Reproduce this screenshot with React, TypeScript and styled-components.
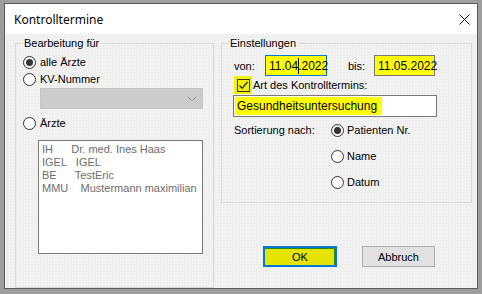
import React from "react"
import styled, { createGlobalStyle } from "styled-components"

const GlobalStyle = createGlobalStyle`
  html, body {
    margin: 0;
    padding: 0;
    background: #9d9d9d;
  }
  body {
    font-family: "Liberation Sans", Arial, sans-serif;
    font-size: 11px;
    color: #000;
  }
`

const Window = styled.div`
  margin: 3px 0 0 4px;
  width: 472px;
  height: 284px;
  border: 1px solid #5a5a5a;
  display: flex;
  flex-direction: column;
  background: #f0f0f0;
`

const TitleBar = styled.div`
  height: 30px;
  background: #fff;
  display: flex;
  align-items: center;
  justify-content: space-between;
  padding-left: 9px;
`

const Title = styled.div`
  font-family: "Noto Sans", "Open Sans", sans-serif;
  font-size: 12px;
  color: #000;
`

const CloseButton = styled.div`
  width: 26px;
  height: 30px;
  display: flex;
  align-items: center;
  justify-content: center;
`

const Body = styled.div`
  flex: 1;
  display: flex;
  gap: 7px;
  padding: 3px 0 0 10px;
  background-color: #efefef;
  background-image: radial-gradient(#fbfbfb 0.7px, transparent 0.9px);
  background-size: 3px 3px;
`

const Group = styled.fieldset<{ $w: number; $pb: number }>`
  margin: 0;
  padding: 0 0 ${(p) => p.$pb}px 0;
  min-width: 0;
  width: ${(p) => p.$w}px;
  box-sizing: border-box;
  border: 1px solid #d9d9d9;
  display: flex;
  flex-direction: column;
`

const Legend = styled.legend`
  margin-left: 7px;
  padding: 0 2px 0 1px;
  line-height: 13px;
`

const RightColumn = styled.div`
  display: flex;
  flex-direction: column;
`

const RadioRow = styled.label<{ $mt?: number }>`
  display: flex;
  align-items: center;
  gap: 4px;
  height: 16px;
  margin-top: ${(p) => p.$mt ?? 0}px;
  margin-left: 7px;
`

const Radio = styled.span<{ $checked?: boolean }>`
  position: relative;
  width: 13px;
  height: 13px;
  box-sizing: border-box;
  border: 1px solid #333;
  border-radius: 50%;
  background: #fff;

  &::after {
    content: "";
    display: ${(p) => (p.$checked ? "block" : "none")};
    position: absolute;
    left: 2px;
    top: 2px;
    width: 7px;
    height: 7px;
    border-radius: 50%;
    background: #333;
  }
`

const Combo = styled.div`
  margin: 1px 0 0 24px;
  width: 163px;
  height: 21px;
  box-sizing: border-box;
  background: #cccccc;
  border: 1px solid #c4c4c4;
  display: flex;
  align-items: center;
  justify-content: flex-end;
  padding-right: 5px;
`

const ListBox = styled.div`
  margin: 9px 0 0 22px;
  width: 165px;
  height: 114px;
  box-sizing: border-box;
  border: 1px solid #7a7a7a;
  background: #fff;
  padding: 2px 0 0 3px;
`

const ListItem = styled.div`
  white-space: pre;
  line-height: 13px;
  color: #6d6d6d;
`

const DateRow = styled.div`
  display: flex;
  align-items: center;
  margin: 5px 0 0 12px;
`

const FieldLabel = styled.span<{ $w: number; $ml?: number }>`
  width: ${(p) => p.$w}px;
  margin-left: ${(p) => p.$ml ?? 0}px;
`

const DateInput = styled.div<{ $focused?: boolean; $w: number }>`
  width: ${(p) => p.$w}px;
  height: 21px;
  box-sizing: border-box;
  border: 1px solid ${(p) => (p.$focused ? "#0078d7" : "#7a7a7a")};
  background: #ffff00;
  display: flex;
  align-items: center;
  padding-left: 3px;
  font-size: 12px;
`

const Caret = styled.span`
  position: relative;

  &::after {
    content: "";
    position: absolute;
    left: 0;
    top: -1px;
    bottom: -1px;
    width: 1px;
    background: #000;
  }
`

const CheckRow = styled.label`
  display: flex;
  align-items: center;
  height: 18px;
  margin: 0 0 0 12px;
`

const CheckHighlight = styled.span`
  width: 18px;
  height: 18px;
  background: #f3f300;
  display: flex;
  align-items: center;
  justify-content: center;
  margin-right: 1px;
`

const CheckBox = styled.span`
  width: 13px;
  height: 13px;
  box-sizing: border-box;
  border: 1px solid #333;
  display: flex;
  align-items: center;
  justify-content: center;
`

const TextInput = styled.div`
  margin: 1px 0 0 11px;
  width: 204px;
  height: 22px;
  box-sizing: border-box;
  border: 1px solid #7a7a7a;
  background: #fff;
  display: flex;
  align-items: center;
  padding-left: 1px;
`

const Marked = styled.span`
  display: inline-block;
  background: #ffff00;
  line-height: 18px;
  padding: 0 5px 0 2px;
  font-size: 12px;
`

const SortGrid = styled.div`
  display: grid;
  grid-template-columns: 97px auto;
  row-gap: 10px;
  margin: 5px 0 0 12px;
`

const SortLabel = styled.span`
  line-height: 16px;
`

const SortRadios = styled.div`
  display: flex;
  flex-direction: column;
  gap: 10px;

  ${RadioRow} {
    margin-left: 0;
    gap: 3px;
  }
`

const ButtonRow = styled.div`
  display: flex;
  gap: 25px;
  margin: 43px 0 0 42px;
`

const Button = styled.button<{ $default?: boolean }>`
  width: ${(p) => (p.$default ? 74 : 73)}px;
  height: 21px;
  box-sizing: border-box;
  font-family: "Liberation Sans", Arial, sans-serif;
  font-size: 11px;
  color: #000;
  padding: 0;
  border: ${(p) => (p.$default ? "2px solid #0078d7" : "1px solid #adadad")};
  background: ${(p) => (p.$default ? "#e4e400" : "#e1e1e1")};
  box-shadow: ${(p) => (p.$default ? "inset -1px 1px 0 #2a8a10" : "none")};
`

const doctors = [
  "IH      Dr. med. Ines Haas",
  "IGEL   IGEL",
  "BE      TestEric",
  "MMU    Mustermann maximilian",
]

export default function App() {
  return (
    <>
      <GlobalStyle />
      <Window>
        <TitleBar>
          <Title>Kontrolltermine</Title>
          <CloseButton>
            <svg width="11" height="11" viewBox="0 0 11 11">
              <path d="M0.5 0.5 L10.5 10.5 M10.5 0.5 L0.5 10.5" stroke="#111" strokeWidth="1" />
            </svg>
          </CloseButton>
        </TitleBar>
        <Body>
          <Group $w={199} $pb={10}>
            <Legend>Bearbeitung für</Legend>
            <RadioRow $mt={4}>
              <Radio $checked />
              alle Ärzte
            </RadioRow>
            <RadioRow $mt={1}>
              <Radio />
              KV-Nummer
            </RadioRow>
            <Combo>
              <svg width="10" height="6" viewBox="0 0 10 6">
                <path d="M0.5 0.5 L5 5 L9.5 0.5" fill="none" stroke="#9a9a9a" strokeWidth="1" />
              </svg>
            </Combo>
            <RadioRow $mt={6}>
              <Radio />
              Ärzte
            </RadioRow>
            <ListBox>
              {doctors.map((d) => (
                <ListItem key={d}>{d}</ListItem>
              ))}
            </ListBox>
          </Group>
          <RightColumn>
            <Group $w={251} $pb={12}>
              <Legend>Einstellungen</Legend>
              <DateRow>
                <FieldLabel $w={31}>von:</FieldLabel>
                <DateInput $focused $w={62}>
                  11.04<Caret>.</Caret>2022
                </DateInput>
                <FieldLabel $w={26} $ml={21}>
                  bis:
                </FieldLabel>
                <DateInput $w={61}>11.05.2022</DateInput>
              </DateRow>
              <CheckRow>
                <CheckHighlight>
                  <CheckBox>
                    <svg width="11" height="11" viewBox="0 0 11 11">
                      <path d="M1.5 5.5 L4.2 8.3 L9.5 2" fill="none" stroke="#333" strokeWidth="1.4" />
                    </svg>
                  </CheckBox>
                </CheckHighlight>
                Art des Kontrolltermins:
              </CheckRow>
              <TextInput>
                <Marked>Gesundheitsuntersuchung</Marked>
              </TextInput>
              <SortGrid>
                <SortLabel>Sortierung nach:</SortLabel>
                <SortRadios>
                  <RadioRow>
                    <Radio $checked />
                    Patienten Nr.
                  </RadioRow>
                  <RadioRow>
                    <Radio />
                    Name
                  </RadioRow>
                  <RadioRow>
                    <Radio />
                    Datum
                  </RadioRow>
                </SortRadios>
              </SortGrid>
            </Group>
            <ButtonRow>
              <Button $default>OK</Button>
              <Button>Abbruch</Button>
            </ButtonRow>
          </RightColumn>
        </Body>
      </Window>
    </>
  )
}
